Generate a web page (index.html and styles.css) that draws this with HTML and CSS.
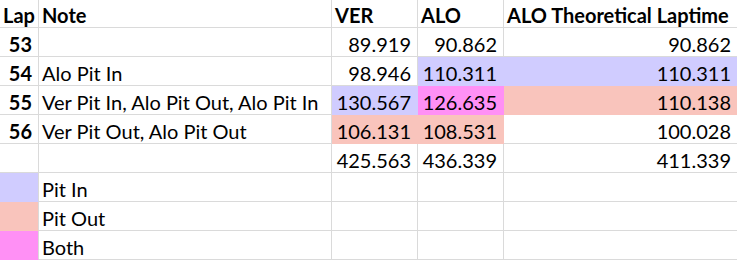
FILE: index.html
```html
<!DOCTYPE html>
<html lang="en">
<head>
<meta charset="utf-8">
<title>Laps</title>
<link rel="stylesheet" href="styles.css">
</head>
<body>
<table class="sheet">
  <colgroup>
    <col class="c-lap"><col class="c-note"><col class="c-num"><col class="c-num"><col class="c-theo">
  </colgroup>
  <tr class="head">
    <td>Lap</td><td>Note</td><td>VER</td><td>ALO</td><td>ALO Theoretical Laptime</td>
  </tr>
  <tr>
    <td class="r b">53</td><td></td><td class="r">89.919</td><td class="r">90.862</td><td class="r">90.862</td>
  </tr>
  <tr>
    <td class="r b">54</td><td>Alo Pit In</td><td class="r">98.946</td><td class="r in">110.311</td><td class="r in">110.311</td>
  </tr>
  <tr>
    <td class="r b">55</td><td>Ver Pit In, Alo Pit Out, Alo Pit In</td><td class="r in">130.567</td><td class="r both">126.635</td><td class="r out">110.138</td>
  </tr>
  <tr>
    <td class="r b">56</td><td>Ver Pit Out, Alo Pit Out</td><td class="r out">106.131</td><td class="r out">108.531</td><td class="r">100.028</td>
  </tr>
  <tr>
    <td></td><td></td><td class="r">425.563</td><td class="r">436.339</td><td class="r">411.339</td>
  </tr>
  <tr>
    <td class="in key"></td><td>Pit In</td><td></td><td></td><td></td>
  </tr>
  <tr>
    <td class="out key"></td><td>Pit Out</td><td></td><td></td><td></td>
  </tr>
  <tr>
    <td class="both key"></td><td>Both</td><td></td><td></td><td></td>
  </tr>
</table>
</body>
</html>
```

FILE: styles.css
```css
html, body {
  margin: 0;
  padding: 0;
  background: #ffffff;
  overflow: hidden;
}

.sheet {
  border-collapse: separate;
  border-spacing: 0;
  table-layout: fixed;
  width: 738px;
  font-family: "Lato", "Liberation Sans", sans-serif;
  font-size: 20px;
  color: #000000;
}

.c-lap { width: 39px; }
.c-note { width: 293px; }
.c-num { width: 86px; }
.c-theo { width: 234px; }

.sheet td {
  padding: 0 4px 0 3px;
  border-right: 1px solid #dadada;
  border-bottom: 1px solid #dadada;
  vertical-align: bottom;
  line-height: 24px;
  white-space: nowrap;
  overflow: hidden;
}

.sheet tr { height: 29px; }
.sheet tr.head { height: 28px; }
.sheet tr.head td { font-weight: bold; }

.sheet td.r { text-align: right; padding-right: 6px; }
.b { font-weight: bold; }

.sheet td.in { background: #d0ccff; border-color: #d0ccff; }
.sheet td.out { background: #f9c4bc; border-color: #f9c4bc; }
.sheet td.both { background: #ff90f5; border-color: #ff90f5; }

.sheet td.key { border-right-color: #dadada; }
```
